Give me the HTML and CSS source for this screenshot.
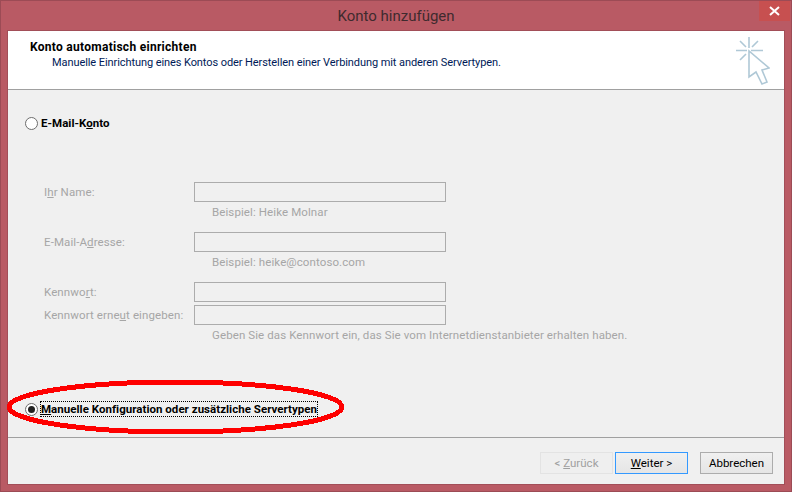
FILE: index.html
```html
<!DOCTYPE html>
<html lang="de">
<head>
  <meta charset="UTF-8">
  <title>Konto hinzufügen</title>
  <link rel="stylesheet" href="styles.css">
</head>
<body>
  <div class="window">
    <div class="titlebar">
      <span class="title">Konto hinzufügen</span>
      <div class="close">
        <svg width="11" height="10" viewBox="0 0 11 10"><path d="M1 1 L10 9 M10 1 L1 9" stroke="#fff" stroke-width="2" fill="none"/></svg>
      </div>
    </div>

    <div class="client">
      <div class="header">
        <div class="header-text">
          <h1>Konto automatisch einrichten</h1>
          <p>Manuelle Einrichtung eines Kontos oder Herstellen einer Verbindung mit anderen Servertypen.</p>
        </div>
        <svg class="wizard-icon" width="34" height="50" viewBox="0 0 34 50" fill="none" stroke="#afc8d6" stroke-width="1.6">
          <path d="M13 1 V12 M0 14.5 H11 M15 14.5 H27 M4 5 L10 11 M22 5 L16 11 M4 24 L10 18"/>
          <path d="M13 15 V41 L20 36 L26 48 L31 46 L26 34 L33 32 Z"/>
        </svg>
      </div>

      <div class="body">
        <label class="radio-row first">
          <span class="radio"></span>
          <span class="radio-label">E-Mail-K<u>o</u>nto</span>
        </label>

        <div class="form">
          <div class="field">
            <span class="field-label">I<u>h</u>r Name:</span>
            <span class="input"></span>
          </div>
          <div class="hint">Beispiel: Heike Molnar</div>

          <div class="field">
            <span class="field-label">E-Mail-A<u>d</u>resse:</span>
            <span class="input"></span>
          </div>
          <div class="hint">Beispiel: heike@contoso.com</div>

          <div class="field">
            <span class="field-label">Kennwo<u>r</u>t:</span>
            <span class="input"></span>
          </div>
          <div class="field field-tight">
            <span class="field-label">Kennwort erne<u>u</u>t eingeben:</span>
            <span class="input"></span>
          </div>
          <div class="hint">Geben Sie das Kennwort ein, das Sie vom Internetdienstanbieter erhalten haben.</div>
        </div>

        <label class="radio-row last">
          <span class="radio checked"></span>
          <span class="radio-label focused"><u>M</u>anuelle Konfiguration oder zusätzliche Servertypen</span>
        </label>
      </div>

      <div class="footer">
        <button class="btn disabled">&lt; <u>Z</u>urück</button>
        <button class="btn primary"><u>W</u>eiter &gt;</button>
        <button class="btn cancel">Abbrechen</button>
      </div>

      <!-- red marker drawn over the screenshot -->
      <svg class="marker" width="342" height="60" viewBox="0 0 342 60" fill="none">
        <ellipse cx="170.5" cy="30" rx="166.5" ry="25" stroke="#fe0000" stroke-width="5" shape-rendering="crispEdges"/>
      </svg>
    </div>
  </div>
</body>
</html>
```

FILE: styles.css
```css
html, body {
  margin: 0;
  padding: 0;
}
body {
  font-family: Roboto, "Open Sans", sans-serif;
  font-size: 11.5px;
  color: #000;
}
.window {
  width: 792px;
  height: 492px;
  box-sizing: border-box;
  background-color: #b95a64;
  border: 1px solid #9c4b55;
  padding: 0 7px 7px 7px;
  display: flex;
  flex-direction: column;
}
.titlebar {
  height: 30px;
  display: flex;
  align-items: center;
  justify-content: center;
  position: relative;
}
.title {
  font-size: 15px;
  color: #3f2a2e;
}
.close {
  position: absolute;
  top: 0;
  right: -6px;
  width: 31px;
  height: 20px;
  background-color: #c75050;
  display: flex;
  align-items: center;
  justify-content: center;
}
.client {
  flex: 1;
  position: relative;
  background-color: #f0f0f0;
  display: flex;
  flex-direction: column;
  box-shadow: 0 0 0 1px #a24e58;
}
.header {
  height: 59px;
  box-sizing: border-box;
  background-color: #fff;
  border-bottom: 1px solid #a0a0a0;
  padding-left: 22px;
  display: flex;
  justify-content: space-between;
}
.header-text {
  padding-top: 9px;
}
.header h1 {
  margin: 0;
  font-size: 12px;
  font-weight: 700;
  line-height: 15px;
  letter-spacing: 0.28px;
}
.header p {
  margin: 0 0 0 22px;
  font-size: 11px;
  line-height: 15px;
  letter-spacing: -0.08px;
  color: #001a57;
}
.wizard-icon {
  margin: 5px 14px 0 0;
}
.body {
  flex: 1;
  display: flex;
  flex-direction: column;
  padding: 26px 0 0 17px;
}
.radio-row {
  display: flex;
  align-items: center;
  gap: 3px;
  height: 14px;
  font-weight: 700;
  letter-spacing: 0.03px;
}
.radio-row.last {
  margin-top: 47px;
}
.radio {
  width: 11px;
  height: 11px;
  border: 1px solid #6d6d6d;
  border-radius: 50%;
  background-color: #fff;
  flex: none;
  position: relative;
}
.radio.checked::after {
  content: "";
  position: absolute;
  top: 2px;
  left: 2px;
  width: 7px;
  height: 7px;
  border-radius: 50%;
  background-color: #222;
}
.radio-label.focused {
  outline: 1px dotted #000;
}
.form {
  margin: 52px 0 0 19px;
  color: #a6a6a6;
  letter-spacing: 0.1px;
}
.field {
  display: flex;
  align-items: center;
  height: 20px;
}
.field-tight {
  margin-top: 3px;
}
.field-label {
  width: 150px;
  flex: none;
}
.input {
  width: 250px;
  height: 18px;
  border: 1px solid #acacac;
  background-color: #f0f0f0;
}
.hint {
  height: 30px;
  line-height: 20px;
  padding-left: 168px;
}
.footer {
  height: 47px;
  box-sizing: border-box;
  border-top: 1px solid #a0a0a0;
  display: flex;
  justify-content: flex-end;
  align-items: flex-start;
  padding: 14px 11px 0 0;
}
.btn {
  width: 73px;
  height: 22px;
  padding: 0;
  font-family: inherit;
  font-size: 11.5px;
  background: linear-gradient(#f0f0f0, #e5e5e5);
  border: 1px solid #acacac;
}
.btn.disabled {
  color: #a0a0a0;
  background: #efefef;
  border-color: #e3e3e3;
  margin-right: 2px;
}
.btn.primary {
  border-color: #3399ff;
  margin-right: 12px;
}
.marker {
  position: absolute;
  left: -3px;
  top: 346px;
}
```
